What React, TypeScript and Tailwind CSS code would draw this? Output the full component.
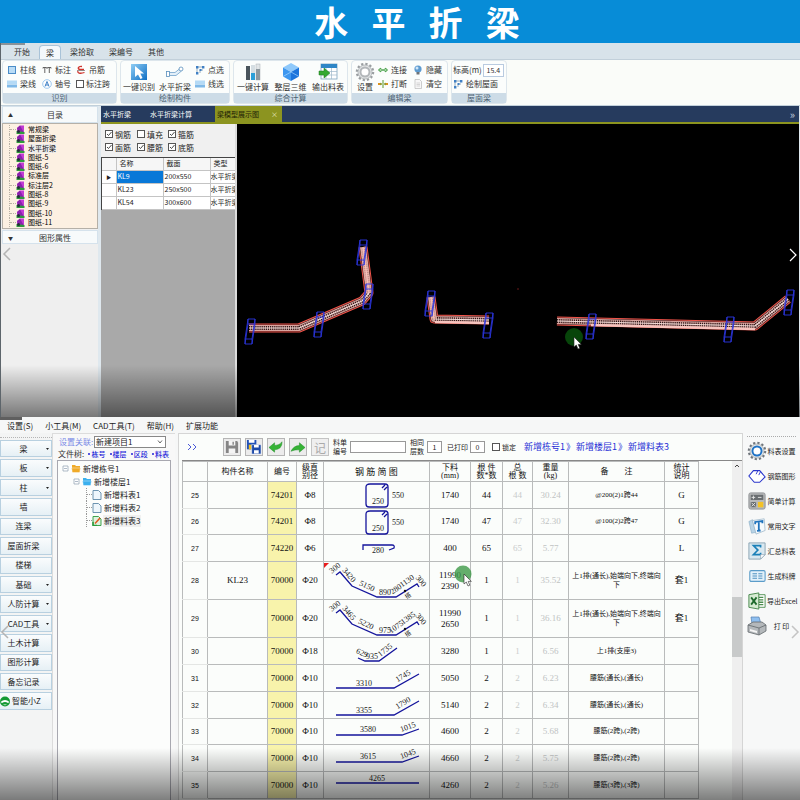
import type { ReactNode } from "react";

const ribbonTabs = ["开始", "梁", "梁拾取", "梁编号", "其他"];

const catalog = ["常规梁", "屋面折梁", "水平折梁", "图纸-5", "图纸-6", "标准层", "标注层2", "图纸-8", "图纸-9", "图纸-10", "图纸-11"];

const layers = [
  { name: "钢筋", on: true },
  { name: "填充", on: false },
  { name: "箍筋", on: true },
  { name: "面筋", on: true },
  { name: "腰筋", on: true },
  { name: "底筋", on: true },
];

const beams = [
  { name: "KL9", size: "200x550", type: "水平折梁" },
  { name: "KL23", size: "250x500", type: "水平折梁" },
  { name: "KL54", size: "300x600", type: "水平折梁" },
];

const menus = ["设置(S)", "小工具(M)", "CAD工具(T)", "帮助(H)", "扩展功能"];

const sideButtons = [
  { name: "梁", menu: true },
  { name: "板", menu: true },
  { name: "柱", menu: true },
  { name: "墙" },
  { name: "连梁" },
  { name: "屋面折梁" },
  { name: "楼梯" },
  { name: "基础", menu: true },
  { name: "人防计算", menu: true },
  { name: "CAD工具", menu: true },
  { name: "土木计算" },
  { name: "图形计算" },
  { name: "备忘记录" },
];

type Label = { t: string; x: number; y: number; r?: number };
type Row = {
  no: number;
  h: string;
  name?: string;
  code: string;
  dia: string;
  path: string;
  labels: Label[];
  len: string[];
  count: string;
  total: string;
  weight: string;
  note: string[];
  stat: string;
  flag?: boolean;
};

const stirrup = "M46 1H61Q64 1 64 4V21Q64 24 61 24H45Q42 24 42 21V4Q42 1 46 1M58 5L61 2M60 7L63 4";
const trough = "M12 12L16 9L28 23L53 34H72L93 21L95 24";

const rows: Row[] = [
  { no: 25, h: "h-[27px]", code: "74201", dia: "Φ8", path: stirrup, labels: [{ t: "250", x: 54, y: 18 }, { t: "550", x: 74, y: 12 }], len: ["1740"], count: "44", total: "44", weight: "30.24", note: ["@200(2)1跨44"], stat: "G" },
  { no: 26, h: "h-[26px]", code: "74201", dia: "Φ8", path: stirrup, labels: [{ t: "250", x: 54, y: 18 }, { t: "550", x: 74, y: 12 }], len: ["1740"], count: "47", total: "47", weight: "32.30", note: ["@100(2)2跨47"], stat: "G" },
  { no: 27, h: "h-[27px]", code: "74220", dia: "Φ6", path: "M39 14V9H68Q71 9 70 12L65 14", labels: [{ t: "280", x: 54, y: 14 }], len: ["400"], count: "65", total: "65", weight: "5.77", note: [], stat: "L" },
  {
    no: 28, h: "h-[38px]", name: "KL23", code: "70000", dia: "Φ20", path: trough, flag: true,
    labels: [{ t: "300", x: 11, y: 5, r: -38 }, { t: "3420", x: 25, y: 12, r: 50 }, { t: "5150", x: 43, y: 23, r: 25 }, { t: "890", x: 61, y: 29 }, { t: "280", x: 72, y: 26, r: -35 }, { t: "1130", x: 83, y: 18, r: -35 }, { t: "300", x: 97, y: 18, r: 50 }],
    len: ["11990", "2390"], count: "1", total: "1", weight: "35.52", note: ["上1排(通长),始端向下,终端向", "下"], stat: "套1",
  },
  {
    no: 29, h: "h-[38px]", code: "70000", dia: "Φ20", path: trough,
    labels: [{ t: "300", x: 11, y: 5, r: -38 }, { t: "3465", x: 25, y: 12, r: 50 }, { t: "5220", x: 42, y: 23, r: 25 }, { t: "975", x: 61, y: 29 }, { t: "1075", x: 72, y: 26, r: -35 }, { t: "1385", x: 84, y: 17, r: -35 }, { t: "300", x: 97, y: 18, r: 50 }],
    len: ["11990", "2650"], count: "1", total: "1", weight: "36.16", note: ["上1排(通长),始端向下,终端向", "下"], stat: "套1",
  },
  { no: 30, h: "h-[27px]", code: "70000", dia: "Φ18", path: "M34 19L41 22H55L73 9", labels: [{ t: "629", x: 38, y: 14, r: 25 }, { t: "935", x: 48, y: 17 }, { t: "1735", x: 61, y: 11, r: -38 }], len: ["3280"], count: "1", total: "1", weight: "6.56", note: ["上1排(支座3)"], stat: "" },
  { no: 31, h: "h-[27px]", code: "70000", dia: "Φ10", path: "M12 22H70L95 8", labels: [{ t: "3310", x: 40, y: 17 }, { t: "1745", x: 79, y: 10, r: -31 }], len: ["5050"], count: "2", total: "2", weight: "6.23", note: ["腰筋(通长),(通长)"], stat: "" },
  { no: 32, h: "h-[27px]", code: "70000", dia: "Φ10", path: "M12 22H70L95 8", labels: [{ t: "3355", x: 40, y: 17 }, { t: "1790", x: 79, y: 10, r: -31 }], len: ["5140"], count: "2", total: "2", weight: "6.34", note: ["腰筋(通长),(通长)"], stat: "" },
  { no: 33, h: "h-[26px]", code: "70000", dia: "Φ10", path: "M12 15H78L95 9", labels: [{ t: "3580", x: 44, y: 9 }, { t: "1015", x: 84, y: 7, r: -20 }], len: ["4600"], count: "2", total: "2", weight: "5.68", note: ["腰筋(2跨),(2跨)"], stat: "" },
  { no: 34, h: "h-[27px]", code: "70000", dia: "Φ10", path: "M12 16H78L95 10", labels: [{ t: "3615", x: 44, y: 10 }, { t: "1045", x: 84, y: 8, r: -20 }], len: ["4660"], count: "2", total: "2", weight: "5.75", note: ["腰筋(2跨),(2跨)"], stat: "" },
  { no: 35, h: "h-[27px]", code: "70000", dia: "Φ10", path: "M12 10H95", labels: [{ t: "4265", x: 53, y: 5 }], len: ["4260"], count: "2", total: "2", weight: "5.26", note: ["腰筋(3跨),(3跨)"], stat: "" },
];

/* ---------- shared bits ---------- */

const Tick = ({ label, on = false, className = "" }: { label: string; on?: boolean; className?: string }) => (
  <label className={`flex items-center gap-[2px] ${className}`}>
    <span className="relative flex">
      <input type="checkbox" defaultChecked={on} className="peer size-2 appearance-none border border-[#555] bg-white" />
      <svg viewBox="0 0 8 8" className="pointer-events-none absolute inset-0 hidden size-2 peer-checked:block">
        <path d="M2 4L3.500 5.500L6.500 2" fill="none" stroke="#333" strokeWidth="0.9" />
      </svg>
    </span>
    {label}
  </label>
);

const Cursor = ({ x, y }: { x: number; y: number }) => (
  <path transform={`translate(${x} ${y})`} d="M0 0V10L2.300 8L4 12L5.800 11.200L4.200 7.400H7.300Z" fill="#fff" stroke="#222" strokeWidth="0.6" />
);

/* ---------- ribbon icons ---------- */

const Square = () => (
  <svg viewBox="0 0 10 10" className="size-[10px]">
    <rect x="1.500" y="1.500" width="7" height="7" fill="#b9dcf6" stroke="#4a8cc8" />
  </svg>
);

const Bars = () => (
  <svg viewBox="0 0 10 10" className="size-[10px]">
    <rect y="1.500" width="10" height="3.500" fill="#b4daf6" />
    <rect y="5.500" width="10" height="3" fill="#7fb9e8" />
  </svg>
);

const DoubleT = () => (
  <svg viewBox="0 0 10 10" className="size-[10px]">
    <path d="M1 3.500V2.500H4.500V3.500M2.800 2.500V8M5.500 3.500V2.500H9V3.500M7.300 2.500V8" fill="none" stroke="#555" strokeWidth="0.9" />
  </svg>
);

const AxisMark = () => (
  <svg viewBox="0 0 10 10" className="size-[10px]">
    <circle cx="5" cy="5" r="4.300" fill="#fff" stroke="#86bdec" strokeWidth="0.8" />
    <path d="M3 7.500L5 2.500L7 7.500M3.700 6H6.300" fill="none" stroke="#2a74c0" strokeWidth="0.9" />
  </svg>
);

const Hanger = () => (
  <svg viewBox="0 0 10 10" className="size-[10px]">
    <path d="M6 1.500C2 1 1 4 4 4.500H8M2 6C1 8 4 9 8.500 7.500" fill="none" stroke="#d0342c" strokeWidth="1.300" />
    <path d="M1 5.500H9" stroke="#555" strokeWidth="0.6" />
  </svg>
);

const Nodes = () => (
  <svg viewBox="0 0 10 10" className="size-[10px]">
    <path d="M2 8.500V2H8.500M5 5.500V8M5.500 5H8" fill="none" stroke="#7b97ad" strokeWidth="0.8" />
    <path d="M1 1h2.400v2.400H1zM7 1h2.400v2.400H7zM1 7h2.400v2.400H1zM4.500 4h2v2h-2z" fill="#3f7fc4" />
  </svg>
);

const Pick = () => (
  <svg viewBox="0 0 18 18" className="size-[18px]">
    <defs>
      <linearGradient id="pick" x1="0" y1="0" x2="1" y2="1">
        <stop offset="0" stopColor="#8fcdf4" />
        <stop offset="1" stopColor="#0f6fc4" />
      </linearGradient>
    </defs>
    <rect x="1" y="1" width="16" height="16" fill="url(#pick)" />
    <path d="M5 3V14L8 11.500L10.500 16L12.500 15L10.300 10.600H14Z" fill="#fff" />
  </svg>
);

const FoldBeam = () => (
  <svg viewBox="0 0 18 18" className="size-[18px]">
    <path d="M3 9.500H9L14 5.500L15.500 8L10 12.500H3Z" fill="#e4f0f9" stroke="#7fabcf" strokeWidth="0.9" />
    <rect x="0.500" y="8.500" width="3" height="5" fill="#fff" stroke="#5a8fbd" strokeWidth="0.8" />
    <circle cx="15" cy="6" r="2" fill="#fff" stroke="#5a8fbd" strokeWidth="0.8" />
  </svg>
);

const Columns = () => (
  <svg viewBox="0 0 18 18" className="size-[18px]">
    <rect x="2" y="3" width="4" height="14" fill="#4a545c" />
    <rect x="7" y="2" width="4" height="15" fill="#d5dee3" />
    <rect x="7" y="10" width="4" height="7" fill="#2b9fd8" />
    <rect x="12" y="1" width="4" height="16" fill="#e2e6e8" stroke="#a8b0b5" strokeWidth="0.5" />
    <rect x="12" y="6" width="4" height="11" fill="#8d989e" />
  </svg>
);

const Cube = () => (
  <svg viewBox="0 0 18 18" className="size-[18px]">
    <path d="M9 0L17 4.500L9 9L1 4.500Z" fill="#8fc9fb" />
    <path d="M1 4.500L9 9V18L1 13.500Z" fill="#3d97f0" />
    <path d="M17 4.500L9 9V18L17 13.500Z" fill="#1b74dc" />
    <path d="M1 13.500L9 9L17 13.500" fill="none" stroke="#b9e0ff" strokeWidth="0.6" />
  </svg>
);

const ExportTable = () => (
  <svg viewBox="0 0 20 18" className="h-[18px] w-[20px]">
    <rect x="3" y="1" width="16" height="15" fill="#fff" stroke="#7da3bf" strokeWidth="0.8" />
    <rect x="3" y="1" width="16" height="4" fill="#2f86c6" />
    <path d="M3 8.500H19M3 12H19M8 5V16M13.500 5V16" stroke="#9db8ca" strokeWidth="0.7" />
    <path d="M1 8H6V5L12 10L6 15V12H1Z" fill="#35a832" stroke="#1d7a1c" strokeWidth="0.5" />
  </svg>
);

const Gear = ({ hub, ring }: { hub: string; ring: string }) => (
  <svg viewBox="0 0 20 20" className="size-5">
    <circle cx="10" cy="10" r="8" fill="none" stroke={ring} strokeWidth="2.500" strokeDasharray="2.200 2" />
    <circle cx="10" cy="10" r="7" fill="#e3e5e6" stroke="#a2a7aa" strokeWidth="0.7" />
    <circle cx="10" cy="10" r="4.500" fill="none" stroke={hub} strokeWidth="2" />
    <circle cx="10" cy="10" r="3.300" fill="#fff" />
  </svg>
);

const Join = () => (
  <svg viewBox="0 0 10 10" className="size-[10px]">
    <path d="M0 5H10" stroke="#3c9b3c" />
    <path d="M4.500 5L2 3V7ZM5.500 5L8 3V7Z" fill="#fff" stroke="#3c9b3c" strokeWidth="0.9" />
  </svg>
);

const Break = () => (
  <svg viewBox="0 0 10 10" className="size-[10px]">
    <path d="M0 5H3.500M6.500 5H10" stroke="#d9921c" strokeWidth="2" />
    <path d="M5 1V9" stroke="#5a9a32" />
    <path d="M4 5L2.500 3.500V6.500ZM6 5L7.500 3.500V6.500Z" fill="#5a9a32" />
  </svg>
);

const Bulb = () => (
  <svg viewBox="0 0 10 10" className="size-[10px]">
    <circle cx="5" cy="4" r="3.600" fill="#5d9bd0" />
    <circle cx="4" cy="3" r="1.500" fill="#cfe6f8" />
    <path d="M3.500 7H6.500V9.500H3.500Z" fill="#6c7378" />
  </svg>
);

const Sheet = () => (
  <svg viewBox="0 0 10 10" className="size-[10px]">
    <path d="M2 0.500H6.500L8.500 2.500V9.500H2Z" fill="#f7f7f7" stroke="#b9b9b9" strokeWidth="0.7" />
    <path d="M3.500 4H7M3.500 5.500H7M3.500 7H7" stroke="#c0c0c0" strokeWidth="0.6" />
  </svg>
);

/* ---------- ribbon ---------- */

const Group = ({ title, className, children }: { title: string; className: string; children: ReactNode }) => (
  <section className={`flex shrink-0 flex-col rounded-sm border border-[#dde6ec] bg-[#fbfdfc] ${className}`}>
    <div className="flex h-8 items-center">{children}</div>
    <h2 className="h-[10px] bg-[#cddce7] text-center text-[8px] leading-[9px] text-[#4c6273]">{title}</h2>
  </section>
);

const Small = ({ icon, label }: { icon: ReactNode; label: string }) => (
  <button className="flex h-[14px] items-center gap-[3px] whitespace-nowrap">
    {icon}
    {label}
  </button>
);

const Big = ({ icon, label, width = "w-8" }: { icon: ReactNode; label: string; width?: string }) => (
  <button className={`flex shrink-0 flex-col items-center whitespace-nowrap ${width}`}>
    <span className="flex h-5 items-center">{icon}</span>
    <span className="leading-[10px]">{label}</span>
  </button>
);

const Ribbon = () => (
  <header className="text-[8px] leading-[10px] text-[#333]">
    <nav className="flex h-4 items-end bg-[#d8e3ea] pl-[7px]">
      {ribbonTabs.map((tab) => (
        <button
          key={tab}
          className={
            tab === "梁"
              ? "mr-[3px] h-[14px] w-[22px] rounded-t-sm border border-b-0 border-[#a9c3d8] bg-[#f3f8fb]"
              : "mr-[3px] h-[14px] px-[6px]"
          }
        >
          {tab}
        </button>
      ))}
    </nav>
    <div className="flex gap-[3px] border-y border-[#c2d0da] bg-[#fafcf9] pr-1 pb-px pl-px">
      <Group title="识别" className="w-[115px]">
        <div className="grid grid-cols-[35px_34px_auto] pl-1">
          <Small icon={<Square />} label="柱线" />
          <Small icon={<DoubleT />} label="标注" />
          <Small icon={<Hanger />} label="吊筋" />
          <Small icon={<Bars />} label="梁线" />
          <Small icon={<AxisMark />} label="轴号" />
          <Tick label="标注跨" className="whitespace-nowrap" />
        </div>
      </Group>
      <Group title="绘制构件" className="w-[110px]">
        <div className="flex items-center gap-1 pl-[2px]">
          <Big icon={<Pick />} label="一键识别" />
          <Big icon={<FoldBeam />} label="水平折梁" />
          <div>
            <Small icon={<Nodes />} label="点选" />
            <Small icon={<Bars />} label="线选" />
          </div>
        </div>
      </Group>
      <Group title="综合计算" className="w-[115px]">
        <div className="flex w-full justify-between px-[3px]">
          <Big icon={<Columns />} label="一键计算" />
          <Big icon={<Cube />} label="整层三维" />
          <Big icon={<ExportTable />} label="输出料表" />
        </div>
      </Group>
      <Group title="编辑梁" className="w-[97px]">
        <Big icon={<Gear hub="#b3b7ba" ring="#9a9ea1" />} label="设置" width="w-[26px]" />
        <div className="grid flex-1 grid-cols-[35px_auto]">
          <Small icon={<Join />} label="连接" />
          <Small icon={<Bulb />} label="隐藏" />
          <Small icon={<Break />} label="打断" />
          <Small icon={<Sheet />} label="清空" />
        </div>
      </Group>
      <Group title="屋面梁" className="w-[56px]">
        <div className="pl-px">
          <label className="flex h-[14px] items-center gap-px whitespace-nowrap">
            标高(m)
            <input defaultValue="15.4" className="h-[13px] w-[21px] border border-[#b9cbe0] bg-white text-center text-[7px]" />
          </label>
          <Small icon={<Nodes />} label="绘制屋面" />
        </div>
      </Group>
    </div>
  </header>
);

/* ---------- upper window ---------- */

const Book = () => (
  <svg viewBox="0 0 9 9" className="size-[9px]">
    <path d="M1 3L4 0.500H8V7L5 8.500H1Z" fill="#c23bd4" />
    <path d="M1 3L4 0.500L7 6L8 8.500H3Z" fill="#8a23ac" />
    <path d="M0.500 6L8.500 7V9H0.500Z" fill="#2f9c3c" />
    <circle cx="2.500" cy="6.500" r="1.500" fill="#24303a" />
  </svg>
);

const Catalog = () => (
  <aside className="flex w-[97px] shrink-0 flex-col bg-[#efefef] pl-px text-[8px] leading-[9px]">
    <h2 className="flex h-[17px] items-center border border-[#d5e2ec] bg-[#f7fafb] pl-[5px] text-[#333]">
      <span className="text-[5px]">▲</span>
      <span className="flex-1 text-center">目录</span>
    </h2>
    <ul className="grid h-[106px] border border-[#b5b0a8] bg-[#fcf0e2] py-px pl-[6px] text-[7px]">
      {catalog.map((item) => (
        <li key={item} className="flex items-center border-l border-dotted border-[#b9b2a6]">
          <span className="w-[6px] border-t border-dotted border-[#b9b2a6]" />
          <a href="#" className="flex items-center gap-[3px]">
            <Book />
            <span className={item === "水平折梁" ? "bg-[#ececec]" : ""}>{item}</span>
          </a>
        </li>
      ))}
    </ul>
    <h2 className="mt-px flex h-[14px] items-center border border-[#d5e2ec] bg-[#f7fafb] pl-[5px] text-[#333]">
      <span className="text-[5px]">▼</span>
      <span className="flex-1 text-center">图形属性</span>
    </h2>
    <button aria-label="上一张" className="mt-[3px] w-[10px]">
      <svg viewBox="0 0 10 14" className="h-[14px] w-[10px]">
        <path d="M8 1L2 7L8 13" fill="none" stroke="#b4b4b4" strokeWidth="1.500" />
      </svg>
    </button>
  </aside>
);

const Column = ({ x, y, dx = -3 }: { x: number; y: number; dx?: number }) => (
  <path
    d={`M${x} ${y}h7v5h-7zM${x + dx} ${y + 20}h7v5h-7zM${x} ${y}l${dx} 20M${x + 7} ${y}l${dx} 20M${x} ${y + 5}l${dx} 20M${x + 7} ${y + 5}l${dx} 20`}
    fill="none"
    stroke="#2b35e0"
    strokeWidth="0.9"
  />
);

const Beam = ({ d }: { d: string }) => (
  <g fill="none" strokeLinejoin="round">
    <path d={d} stroke="#f2544a" strokeWidth="9" />
    <path d={d} stroke="#3a1c1c" strokeWidth="7" />
    <path d={d} stroke="#d9a5a0" strokeWidth="5.800" />
    <path d={d} stroke="#2c1818" strokeWidth="4" strokeDasharray="1.200 0.900" />
    <path d={d} stroke="#f3dcd8" strokeWidth="1.200" />
  </g>
);

const Model = () => (
  <svg viewBox="0 0 562 293" className="block w-full bg-black" role="img" aria-label="梁模型">
    <Beam d="M12 204H62L83 195L125 177L132 169L126 123" />
    <path d="M132 169L126 123" stroke="#f6b8b0" strokeWidth="5" opacity="0.75" />
    <Column x={11} y={195} />
    <Column x={80} y={188} />
    <Column x={129} y={160} />
    <Column x={123} y={116} />
    <Beam d="M194 173L197 195L252 196" />
    <path d="M194 173L197 195" stroke="#f6b8b0" strokeWidth="5" opacity="0.75" />
    <path d="M198 198L252 199" stroke="#f6c4be" strokeWidth="2.500" />
    <Column x={191} y={167} />
    <Column x={249} y={189} />
    <Beam d="M320 197L518 202L551 175" />
    <path d="M354 201L518 205" stroke="#f6c4be" strokeWidth="2.500" />
    <Column x={352} y={190} />
    <Column x={490} y={193} />
    <Column x={550} y={166} />
    <circle cx="337" cy="213" r="9" fill="#07450a" />
    <Cursor x={337} y={213} />
    <circle cx="281" cy="165" r="0.800" fill="#7a1d1d" />
    <path d="M553 125L559 131L553 137" fill="none" stroke="#fff" strokeWidth="1.200" />
  </svg>
);

const BeamPanel = () => (
  <div className="flex w-[136px] shrink-0 flex-col border-r-2 border-[#dcdcdc] bg-[#a9a9a9] text-[7px] leading-[9px] text-[#222]">
    <div className="grid h-[33px] grid-cols-[32px_31px_auto] content-center gap-y-1 bg-[#f0f0f0] pl-1 text-[8px]">
      {layers.map((l) => (
        <Tick key={l.name} label={l.name} on={l.on} />
      ))}
    </div>
    <div className="overflow-hidden border-t border-l border-[#444]">
      <table className="w-[146px] table-fixed border-collapse bg-white">
        <thead>
          <tr className="h-[12px] bg-[#f6f6f6] text-left">
            <th className="w-[14px]" />
            <th className="w-[47px] border border-t-0 border-[#c4c4c4] pl-[3px] font-normal">名称</th>
            <th className="w-[47px] border border-t-0 border-[#c4c4c4] pl-[3px] font-normal">截面</th>
            <th className="border border-t-0 border-[#c4c4c4] pl-[3px] font-normal">类型</th>
          </tr>
        </thead>
        <tbody>
          {beams.map((b, i) => (
            <tr key={b.name} className="h-[13px] whitespace-nowrap">
              <td className="border border-l-0 border-[#c4c4c4] text-center text-[5px]">{i === 0 ? "▶" : ""}</td>
              <td className={i === 0 ? "border border-[#c4c4c4] bg-[#0878d8] pl-px text-white" : "border border-[#c4c4c4] pl-px"}>{b.name}</td>
              <td className="border border-[#c4c4c4] pl-px">{b.size}</td>
              <td className="overflow-hidden border border-[#c4c4c4]">{b.type}</td>
            </tr>
          ))}
        </tbody>
      </table>
    </div>
  </div>
);

const Shade = () => <div className="pointer-events-none absolute inset-x-0 bottom-0 h-[52px] bg-linear-to-b from-transparent to-black/50" />;

const ModelWindow = () => (
  <section className="relative border-l border-[#5d656b] bg-[#dfe8ee]">
    <Ribbon />
    <div className="flex gap-[3px] pr-px">
      <Catalog />
      <div className="flex min-w-0 flex-1 flex-col">
        <nav className="flex h-[18px] items-stretch border-b-2 border-[#8c9420] bg-[#263b5e] text-left text-[7px] text-white">
          <button className="w-[47px] pl-[2px] text-left">水平折梁</button>
          <button className="w-[67px] pl-[2px] text-left">水平折梁计算</button>
          <span className="flex w-[67px] items-center justify-between bg-[#8c9420] pr-1 pl-[2px] text-[#1d2206]">
            <button>梁模型展示图</button>
            <button aria-label="关闭" className="text-[#e8ebc4]">×</button>
          </span>
          <button aria-label="更多" className="ml-auto pr-1 text-[11px] leading-[14px] text-[#c4cede]">»</button>
        </nav>
        <div className="flex flex-1">
          <BeamPanel />
          <div className="min-w-0 flex-1 bg-black">
            <Model />
          </div>
        </div>
      </div>
    </div>
    <span className="absolute top-0 left-0 h-[2px] w-6 bg-[#8a9298]" />
    <Shade />
  </section>
);

/* ---------- lower window ---------- */

const SideButtons = () => (
  <aside className="relative w-[52px] shrink-0 bg-[#f3f4f4] pt-[4px]">
    <div className="flex h-[273px] flex-col border-t border-dotted border-[#b5b5b5] text-[8px] leading-[10px] text-[#222]">
      {sideButtons.map((b) => (
        <button key={b.name} className="mt-[2px] flex flex-1 items-center border border-[#b8d0e0] bg-linear-to-b from-[#fafcfd] to-[#e6f0f5] pr-[2px]">
          <span className="flex-1 text-center">{b.name}</span>
          <svg viewBox="0 0 3 2" className="h-[2px] w-[3px]">
            {b.menu && <path d="M0 0H3L1.500 2Z" fill="#222" />}
          </svg>
        </button>
      ))}
      <button className="mt-[2px] flex flex-1 items-center gap-px border border-l-0 border-[#b8d0e0] bg-linear-to-b from-[#fafcfd] to-[#e6f0f5]">
        <svg viewBox="0 0 11 11" className="size-[11px]">
          <circle cx="5" cy="5.500" r="5" fill="#169a35" />
          <path d="M0.500 6Q5 2 9.500 6L8 7Q5 5 2 7ZM3 8.500Q5 10 7 8.500Z" fill="#fff" />
        </svg>
        智能小Z
      </button>
    </div>
    <svg viewBox="0 0 10 14" className="absolute top-[192px] left-0 h-[14px] w-[10px]">
      <path d="M8 1L2 7L8 13" fill="none" stroke="#b4b4b4" strokeWidth="1.500" />
    </svg>
  </aside>
);

const Folder = ({ color }: { color: string }) => (
  <svg viewBox="0 0 10 9" className="h-[9px] w-[10px]">
    <path d="M1 1H4L5 2H9V8H1Z" fill={color} />
    <path d="M0.500 4H9.500L8.500 8.500H1.500Z" fill={color} stroke="#fff" strokeWidth="0.400" />
  </svg>
);

const Doc = ({ active = false }: { active?: boolean }) => (
  <svg viewBox="0 0 10 10" className="size-[10px]">
    <path d="M1 0.500H6.500L9 3V9.500H1Z" fill={active ? "#dff2df" : "#eef6fc"} stroke={active ? "#2c9a3c" : "#5d88a8"} strokeWidth="0.900" />
    {active && <path d="M3 7.500L8 2" stroke="#e0571c" strokeWidth="1.500" />}
    {active && <path d="M1 6V9.500H5" fill="none" stroke="#2c9a3c" strokeWidth="1.500" />}
  </svg>
);

const Toggle = () => (
  <svg viewBox="0 0 7 7" className="size-[7px]">
    <path d="M1 1H6V6H1ZM2 3.500H5" fill="#fff" stroke="#8d9db0" strokeWidth="0.700" />
  </svg>
);

const ProjectTree = () => (
  <aside className="flex w-[123px] shrink-0 flex-col border-t border-l border-[#dcdcdc] bg-[#f8f8f8] px-1 pt-[2px] text-[8px] leading-[12px]">
    <label className="flex h-[12px] items-center justify-between pr-[5px] pl-[2px] text-[#7c8be6]">
      设置关联:
      <span className="relative flex">
        <select className="h-[12px] w-[72px] appearance-none border border-[#888] bg-white pl-px text-[8px] leading-[10px] text-[#222]">
          <option>新建项目1</option>
        </select>
        <svg viewBox="0 0 6 4" className="pointer-events-none absolute top-1 right-[3px] h-1 w-[6px]">
          <path d="M1 0.500L3 3L5 0.500" fill="none" stroke="#444" strokeWidth="0.8" />
        </svg>
      </span>
    </label>
    <div className="flex h-[12px] justify-between pr-[2px] pl-px text-[7px] whitespace-nowrap text-[#333]">
      <span className="text-[8px]">文件树:</span>
      {["栋号", "楼层", "区段", "料表"].map((t) => (
        <a key={t} href="#" className="flex items-center gap-px font-medium text-[#2222d8]">
          <span className="size-[2px] rounded-full bg-[#2222d8]" />
          {t}
        </a>
      ))}
    </div>
    <ul className="flex-1 border border-b-0 border-[#a8a8b0] bg-[#fcfdfc] pt-px pl-1 text-[#222]">
      <li className="flex h-[13px] items-center gap-[2px]">
        <Toggle />
        <Folder color="#efaa28" />
        新增栋号1
      </li>
      <li className="flex h-[13px] items-center gap-[2px] pl-[11px]">
        <Toggle />
        <Folder color="#3cb0ee" />
        新增楼层1
      </li>
      {[1, 2, 3].map((n) => (
        <li key={n} className="ml-6 flex h-[13px] items-center border-l border-dotted border-[#999]">
          <span className="w-[5px] border-t border-dotted border-[#999]" />
          <Doc active={n === 3} />
          <span className={n === 3 ? "ml-px bg-[#f0f0f0] px-px" : "ml-px px-px"}>新增料表{n}</span>
        </li>
      ))}
    </ul>
  </aside>
);

const Disk = ({ color }: { color: string }) => (
  <>
    <path d="M2 2H14L15 4V15H2Z" fill={color} />
    <path d="M5 2H12V7H5ZM5 10H12V15H5Z" fill="#f4f4f4" />
    <path d="M9 3H10.500V6H9Z" fill={color} />
  </>
);

const Tool = ({ label, children }: { label: string; children: ReactNode }) => (
  <button aria-label={label} className="flex size-[18px] items-center justify-center border border-[#b5b5b5] bg-[#ececec]">
    <svg viewBox="0 0 17 17" className="size-4">
      {children}
    </svg>
  </button>
);

const Toolbar = () => (
  <div className="flex h-[26px] items-center text-[7px] leading-[9px] whitespace-nowrap text-[#222]">
    <button aria-label="展开" className="mr-[25px] ml-[5px]">
      <svg viewBox="0 0 11 8" className="h-2 w-[11px]">
        <path d="M1 1L4 4L1 7M6 1L9 4L6 7" fill="none" stroke="#4a58d8" />
      </svg>
    </button>
    <div className="flex gap-1">
      <Tool label="保存">
        <Disk color="#858585" />
      </Tool>
      <Tool label="全部保存">
        <path d="M1 1H11V11H1Z" fill="#2152b8" />
        <path d="M3 1H9V4H3Z" fill="#fff" />
        <path d="M3 6H6V11H3Z" fill="#f0c020" />
        <path d="M6 6H16V16H6Z" fill="#1d4aa8" stroke="#fff" strokeWidth="0.6" />
        <path d="M8.500 6.500H13.500V9H8.500ZM8.500 12H13.500V15.500H8.500Z" fill="#fff" />
      </Tool>
      <Tool label="撤销">
        <path d="M1 9L7 4V7Q12 7 15 3Q15 11 7 11.500V14Z" fill="#35b335" stroke="#1c8a24" strokeWidth="0.5" />
      </Tool>
      <Tool label="重做">
        <path d="M16 9L10 4V7Q4 7 1 13Q5 11 10 11.500V14Z" fill="#35b335" stroke="#1c8a24" strokeWidth="0.5" />
      </Tool>
      <button className="size-[18px] border border-[#c4c4c4] bg-[#efefef] text-[12px] leading-[15px] text-[#aaa]">记</button>
    </div>
    <label className="ml-1 flex items-center gap-[3px]">
      <span>
        料单
        <br />
        编号
      </span>
      <input className="h-[12px] w-[56px] border border-[#999] bg-white" />
    </label>
    <label className="ml-1 flex items-center gap-[3px]">
      <span>
        相同
        <br />
        层数
      </span>
      <input defaultValue="1" className="h-[12px] w-[15px] border border-[#999] bg-white text-center" />
    </label>
    <label className="ml-[5px] flex items-center gap-[2px]">
      已打印
      <input defaultValue="0" className="h-[12px] w-[15px] border border-[#999] bg-white text-center" />
    </label>
    <Tick label="锁定" className="ml-[7px]" />
    <nav className="ml-2 flex gap-px text-[9px] leading-[12px] text-[#1f2fd6]">
      <a href="#">新增栋号1</a>
      <span>》</span>
      <a href="#">新增楼层1</a>
      <span>》</span>
      <a href="#">新增料表3</a>
    </nav>
  </div>
);

const Diagram = ({ row }: { row: Row }) => (
  <svg viewBox={`0 0 105 ${row.labels.length > 4 ? 36 : 24}`} className="block w-full overflow-visible">
    {row.flag && <path d="M0 0H5L0 5Z" fill="#e81c1c" />}
    <path d={row.path} fill="none" stroke="#15159c" strokeWidth="1.300" />
    {row.labels.map((l, i) => (
      <text key={i} x={l.x} y={l.y} transform={`rotate(${l.r ?? 0} ${l.x} ${l.y})`} textAnchor="middle" dominantBaseline="central" className="fill-[#222] text-[8px]">
        {l.t}
      </text>
    ))}
    {row.labels.length > 4 && (
      <>
        <circle cx="81" cy="28" r="1.200" fill="#111" />
        <text x="84" y="33" transform="rotate(-35 84 33)" textAnchor="middle" dominantBaseline="central" className="fill-[#222] text-[6px]">
          搭
        </text>
      </>
    )}
  </svg>
);

const cell = "border border-[#b9bbbb] p-0";
const head = "border border-[#b9bbbb] p-0 font-normal";

const RebarTable = () => (
  <table className="w-[516px] table-fixed self-start border-collapse bg-[#fbfdfb] text-center font-['Liberation_Serif','Noto_Sans_CJK_SC',serif] text-[9px] leading-[11px] text-[#111]">
    <colgroup>
      <col className="w-[25px]" />
      <col className="w-[60px]" />
      <col className="w-[29px]" />
      <col className="w-[27px]" />
      <col className="w-[106px]" />
      <col className="w-[41px]" />
      <col className="w-[32px]" />
      <col className="w-[30px]" />
      <col className="w-[36px]" />
      <col className="w-[96px]" />
      <col className="w-[34px]" />
    </colgroup>
    <thead>
      <tr className="h-[20px] text-[8px] leading-[8px] whitespace-nowrap">
        <th className={head} />
        <th className={head}>构件名称</th>
        <th className={head}>编号</th>
        <th className={head}>级直<br />别径</th>
        <th className={`${head} text-[9px]`}>钢 筋 简 图</th>
        <th className={head}>下料<br />(mm)</th>
        <th className={head}>根 件<br />数*数</th>
        <th className={head}>总<br />根 数</th>
        <th className={head}>重量<br />(kg)</th>
        <th className={head}>备　　注</th>
        <th className={head}>统计<br />说明</th>
      </tr>
    </thead>
    <tbody>
      {rows.map((row) => (
        <tr key={row.no} className={row.h}>
          <td className="border-x border-y border-x-[#b9bbbb] border-y-[#e4e6e4] p-0 font-['Liberation_Sans',sans-serif] text-[7px]">{row.no}</td>
          <td className={cell}>{row.name}</td>
          <td className={`${cell} bg-[#f8f3ab]`}>{row.code}</td>
          <td className={cell}>{row.dia}</td>
          <td className={cell}>
            <Diagram row={row} />
          </td>
          <td className={cell}>
            {row.len.map((n) => (
              <div key={n}>{n}</div>
            ))}
          </td>
          <td className={cell}>{row.count}</td>
          <td className={`${cell} text-[#c9cccc]`}>{row.total}</td>
          <td className={`${cell} text-[#c0c3c3]`}>{row.weight}</td>
          <td className={`${cell} text-[7px] leading-[9px] whitespace-nowrap`}>
            {row.note.map((n) => (
              <div key={n}>{n}</div>
            ))}
          </td>
          <td className={cell}>{row.stat}</td>
        </tr>
      ))}
    </tbody>
  </table>
);

const SheetPanel = () => (
  <main className="flex min-w-0 flex-1 flex-col border-x border-t border-[#d5d5d5] bg-[#fbfdfb] pl-[3px]">
    <Toolbar />
    <div className="relative flex flex-1 justify-between border-t border-[#888]">
      <RebarTable />
      <div className="w-[10px] shrink-0 bg-[#efefef]">
        <svg viewBox="0 0 10 10" className="size-[10px]">
          <path d="M3 6L5 4L7 6" fill="none" stroke="#444" />
        </svg>
        <div className="mt-[126px] h-[60px] bg-[#c8caca]" />
      </div>
      {/* pointer hovering over the length column */}
      <svg viewBox="0 0 24 24" className="absolute top-[103px] left-[271px] size-6">
        <circle cx="10" cy="10" r="8.500" fill="#3f9a49" opacity="0.8" />
        <Cursor x={11} y={10} />
      </svg>
    </div>
  </main>
);

const actions: { name: string; icon: ReactNode }[] = [
  { name: "料表设置", icon: <Gear hub="#1f74c8" ring="#70767c" /> },
  {
    name: "钢筋图形",
    icon: (
      <svg viewBox="0 0 20 20" className="size-[18px]">
        <path d="M6 4H13L19 11L13 17H7L1 10Z" fill="#fff" stroke="#2a36cc" strokeWidth="1.200" />
        <path d="M9 8L11 4M12 9L14 5" stroke="#2a36cc" />
      </svg>
    ),
  },
  {
    name: "简单计算",
    icon: (
      <svg viewBox="0 0 20 20" className="size-[18px]">
        <rect x="1" y="1" width="18" height="18" rx="2" fill="#b9babb" stroke="#8a8c8e" />
        <path d="M3 3H17V9H3ZM3 11H9V17H3Z" fill="#6a6e71" />
        <path d="M4 6H8M6 4V8M11 6H15M4 12L8 16M8 12L4 16" stroke="#e8e8e8" />
        <rect x="11" y="11" width="6" height="6" fill="#f4c227" />
      </svg>
    ),
  },
  {
    name: "常用文字",
    icon: (
      <svg viewBox="0 0 20 20" className="size-[18px]">
        <path d="M1 5L5 3L9 17L4 18Z" fill="#b8d3e6" stroke="#7fa3bd" strokeWidth="0.6" />
        <path d="M5 4L18 2L19 15L9 19Z" fill="#f6fafd" stroke="#8aa9c0" strokeWidth="0.7" />
        <path d="M8 8V5.500L16 4.500V7M12 5V15M10 15.500L14 15" fill="none" stroke="#1f73bd" strokeWidth="2" />
      </svg>
    ),
  },
  {
    name: "汇总料表",
    icon: (
      <svg viewBox="0 0 20 20" className="size-[18px]">
        <path d="M1 1H19V14L14 19H1Z" fill="#d9e8f0" stroke="#87a0b0" />
        <path d="M14 6V4H6L11 9L6 14H14V12" fill="none" stroke="#1b80b8" strokeWidth="1.800" />
        <path d="M14 19V14H19Z" fill="#fff" stroke="#87a0b0" strokeWidth="0.7" />
      </svg>
    ),
  },
  {
    name: "生成料牌",
    icon: (
      <svg viewBox="0 0 20 20" className="size-[18px]">
        <rect x="2" y="4" width="17" height="12" rx="1.500" fill="#e3f1fa" stroke="#5b9cc9" strokeWidth="1.200" />
        <path d="M5 7.500H10M5 10H10M5 12.500H10M11.500 7.500H16M11.500 10H16M11.500 12.500H16" stroke="#3f86ba" />
      </svg>
    ),
  },
  {
    name: "导出Excel",
    icon: (
      <svg viewBox="0 0 20 20" className="size-[18px]">
        <path d="M9 3H19V17H9Z" fill="#fff" stroke="#4c8d4f" />
        <path d="M11.500 6H17M11.500 8.700H17M11.500 11.400H17M11.500 14H17" stroke="#4c8d4f" strokeWidth="1.500" />
        <path d="M1 3L12 1V19L1 17Z" fill="#d6ebd2" stroke="#3f8344" />
        <path d="M3.500 6L9.500 14M9.500 6L3.500 14" stroke="#1e6a2c" strokeWidth="2" />
      </svg>
    ),
  },
  {
    name: "打 印",
    icon: (
      <svg viewBox="0 0 20 20" className="size-5">
        <path d="M5 8L4 1L12 1L14 8Z" fill="#8fbff0" stroke="#5580b0" strokeWidth="0.7" />
        <path d="M1 9L6 6H15L19 9V15L12 19L1 16Z" fill="#b4b8bb" stroke="#62686c" strokeWidth="0.8" />
        <path d="M1 9L12 12L19 9M12 12V19" fill="none" stroke="#62686c" strokeWidth="0.8" />
        <path d="M3 13L10 15V17L3 15Z" fill="#f4f4f4" />
      </svg>
    ),
  },
];

const Actions = () => (
  <aside className="relative w-[57px] shrink-0 bg-[#f7f8f8] px-1 pt-[3px]">
    <div className="flex flex-col gap-[5px] border-t border-dotted border-[#aaa] pt-1">
      {actions.map((a) => (
        <button key={a.name} className="flex h-5 items-center text-[7px] leading-[9px] whitespace-nowrap text-[#222]">
          <span className="flex w-5 shrink-0 justify-center">{a.icon}</span>
          <span className="flex-1 text-center">{a.name}</span>
        </button>
      ))}
    </div>
    <svg viewBox="0 0 10 14" className="absolute top-[192px] right-0 h-[14px] w-[10px]">
      <path d="M2 1L8 7L2 13" fill="none" stroke="#c4c4c4" strokeWidth="1.500" />
    </svg>
  </aside>
);

const SheetWindow = () => (
  <section className="relative flex flex-1 flex-col overflow-hidden bg-[#f6f7f7]">
    <nav className="flex h-4 items-end gap-3 pl-[7px] text-[8px] leading-[14px] text-[#222]">
      {menus.map((m) => (
        <button key={m}>{m}</button>
      ))}
    </nav>
    <div className="flex flex-1">
      <SideButtons />
      <ProjectTree />
      <div className="w-[3px] shrink-0" />
      <SheetPanel />
      <Actions />
    </div>
    <span className="absolute top-0 left-0 h-[3px] w-[22px] bg-[#5f5f5f]" />
    <Shade />
  </section>
);

export default function App() {
  return (
    <div className="flex min-h-screen flex-col font-['Noto_Sans_CJK_SC',sans-serif]">
      <h1 className="h-[43px] bg-[#078cd7] pl-[34px] text-center text-[34px] leading-[43px] font-bold whitespace-pre text-white">水   平   折   梁</h1>
      <ModelWindow />
      <SheetWindow />
    </div>
  );
}
